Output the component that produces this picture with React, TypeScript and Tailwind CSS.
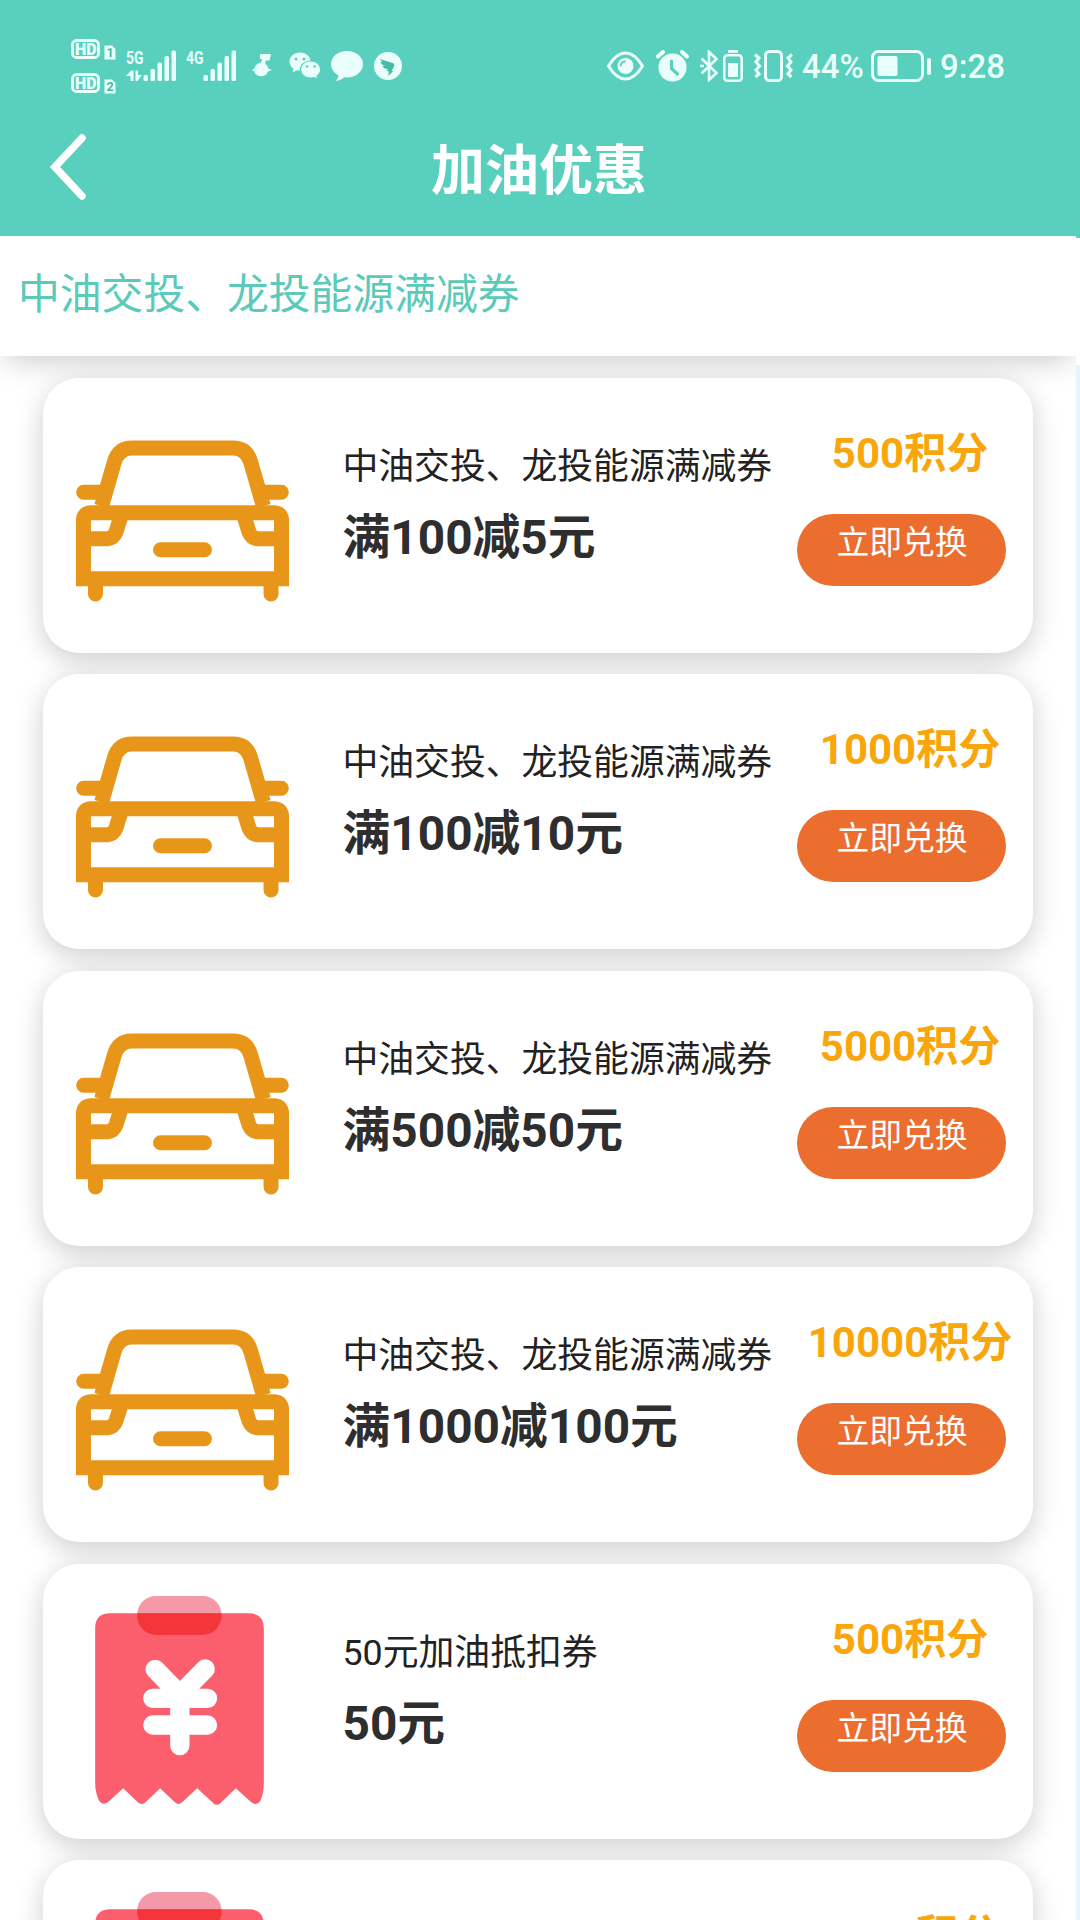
import type { ReactNode } from "react";

type Coupon = {
  id: number;
  icon: "car" | "ticket";
  name: string;
  value: string;
  points: number;
};

const coupons: Coupon[] = [
  { id: 1, icon: "car", name: "中油交投、龙投能源满减券", value: "满100减5元", points: 500 },
  { id: 2, icon: "car", name: "中油交投、龙投能源满减券", value: "满100减10元", points: 1000 },
  { id: 3, icon: "car", name: "中油交投、龙投能源满减券", value: "满500减50元", points: 5000 },
  { id: 4, icon: "car", name: "中油交投、龙投能源满减券", value: "满1000减100元", points: 10000 },
  { id: 5, icon: "ticket", name: "50元加油抵扣券", value: "50元", points: 500 },
  { id: 6, icon: "ticket", name: "50元加油抵扣券", value: "100元", points: 1000 },
];

function CarIcon() {
  return (
    <svg className="w-[213px] h-[162px]" viewBox="137 209 640 485" fill="none" stroke="#e8961a" strokeWidth={45}>
      <path d="M214 407 L252 275 Q264 232 305 232 H609 Q650 232 662 275 L700 407" />
      <path d="M160 365 H215 M699 365 H754" strokeLinecap="round" />
      <path d="M159.5 625 V447 Q162 426.5 182 426.5 H732 Q752 426.5 754.5 447 V625 Z" />
      <path d="M170 505 H232 Q250 503 257 485 L271 440 M744 505 H682 Q664 503 657 485 L643 440" />
      <path d="M391 538 H523 M195.500 640 V671 M723 640 V671" strokeLinecap="round" />
    </svg>
  );
}

function TicketIcon() {
  return (
    <svg className="w-[169px] h-[210px]" viewBox="197 138 506 630">
      <rect x="323" y="138" width="253" height="117" rx="56" fill="#f399a8" />
      <path
        d="M242 190 H658 Q703 190 703 235 V700 Q703 730 692 754 Q682 768 665 757 L619 715 L574 758 Q562 771 550 758 L503 715 L458 757 Q447 767 436 757 L392 715 L348 757 Q336 767 325 757 L281 715 L237 755 Q219 769 208 751 Q197 728 197 700 V235 Q197 190 242 190 Z"
        fill="#fb5f6d"
      />
      <path d="M323 190 H576 V199 Q576 220 560 238 Q542 255 520 255 H379 Q357 255 339 238 Q323 220 323 199 Z" fill="#f4363a" />
      <path
        d="M377 358 L451 434 L527 357 M370 445 H534 M370 525 H534 M451 434 V587"
        fill="none"
        stroke="#fff"
        strokeWidth={58}
        strokeLinecap="round"
      />
    </svg>
  );
}

function HdBadge({ sim }: { sim: string }) {
  return (
    <svg className="w-[44px] h-[20px] overflow-visible" viewBox="0 0 44 20">
      <rect x="1.500" y="1.500" width="26" height="17" rx="4" fill="none" stroke="#eafffb" strokeWidth={2.8} />
      <text x="4" y="16" textLength="21.500" lengthAdjust="spacingAndGlyphs" fontSize="17" fontWeight="900" fill="#eafffb">
        HD
      </text>
      <path d="M33.500 6.500 H41 L44.500 10 V20.500 H33.500 Z" fill="#eafffb" />
      <text x="39" y="18.300" textAnchor="middle" fontSize="12.500" fontWeight="700" fill="#3fb9a4">
        {sim}
      </text>
    </svg>
  );
}

function Signal({ label, arrows }: { label: string; arrows?: boolean }) {
  return (
    <svg className="w-[50px] h-[32px] overflow-visible" viewBox="0 0 50 32" fill="#eafffb">
      <text x="-1" y="14" fontSize="19" fontWeight="700" textLength="17.500" lengthAdjust="spacingAndGlyphs">
        {label}
      </text>
      {arrows && <path d="M-1 26 L4 20.500 H6.500 V31 H3.500 V26 Z M8.500 20.500 H11 V25 H15 L10.500 31 H8.500 Z" />}
      <rect x="16.500" y="25" width="4.500" height="6" rx="1.500" />
      <rect x="23.500" y="19" width="4.500" height="12" rx="1.500" />
      <rect x="30.500" y="12.500" width="4.500" height="18.500" rx="1.500" />
      <rect x="37.500" y="6" width="4.500" height="25" rx="1.500" />
      <rect x="44.500" y="0.500" width="4.500" height="30.500" rx="1.500" />
    </svg>
  );
}

function StatusBar() {
  return (
    <div className="h-[106px] pt-[26px] pl-[71px] pr-[71px] flex items-center justify-between text-[#eafffb]">
      <div className="flex items-center">
        <div className="flex flex-col gap-[14px]">
          <HdBadge sim="1" />
          <HdBadge sim="2" />
        </div>
        <div className="ml-[12px]">
          <Signal label="5G" arrows />
        </div>
        <div className="ml-[10px]">
          <Signal label="4G" />
        </div>
        {/* music note */}
        <svg className="ml-[15px] w-[20px] h-[24px]" viewBox="0 0 20 24" fill="#eafffb">
          <path d="M8 0 H19 L17.500 6.500 H13.500 V10 A7.300 7.300 0 0 1 16.300 14.500 L20 16 L16 17.500 A7.300 7.300 0 0 1 2.300 17.500 L0 15.800 L2.300 14.500 A7.500 7.500 0 0 1 8.500 9 L10.500 5 H8 Z" />
        </svg>
        {/* wechat */}
        <svg className="ml-[17px] w-[32px] h-[28px]" viewBox="0 0 32 28">
          <path d="M11 0.500 C5 0.500 0.500 4.500 0.500 9.500 C0.500 12.500 2 15 4.500 16.700 L3.500 20.500 L8 18.200 C17 20 21.500 15 21.500 9.500 C21.500 4.500 17 0.500 11 0.500 Z" fill="#eafffb" />
          <path
            d="M21.500 9 C15.700 9 11.500 12.500 11.500 17.500 C11.500 22.500 16 26 21.500 26 Q23.500 26 25 25.500 L28.800 27.500 L28 24 C30.500 22.300 31.700 20 31.700 17.500 C31.700 12.500 27.300 9 21.500 9 Z"
            fill="#eafffb"
            stroke="#58d0bd"
            strokeWidth={1.2}
          />
          <g fill="#58d0bd">
            <circle cx="7" cy="7" r="1.500" />
            <circle cx="15" cy="7" r="1.500" />
            <circle cx="18" cy="14.500" r="1.300" />
            <circle cx="25.500" cy="14.500" r="1.300" />
          </g>
        </svg>
        {/* chat bubble */}
        <svg className="ml-[10px] w-[32px] h-[30px]" viewBox="0 0 32 30" fill="#eafffb">
          <path d="M16 0 C7 0 0 5.800 0 13 C0 18 3 22 7.500 24.500 Q7 28 4.500 30 Q10 29.500 13 26.300 C24 27.500 32 21 32 13 C32 5.800 25 0 16 0 Z" />
        </svg>
        {/* dingtalk */}
        <svg className="ml-[11px] w-[28px] h-[28px]" viewBox="0 0 28 28">
          <circle cx="14" cy="14" r="14" fill="#eafffb" />
          <path d="M5.500 7 L18.500 11 Q21 12 20 14.500 L17.500 19 H19.500 L14 24 L15 19.500 L12.500 19 L14 17 Q10 17.500 8.500 14 L11 14 Q7 12.500 6.500 9.800 L8.500 10 Z" fill="#45bba8" />
        </svg>
      </div>

      <div className="flex items-center">
        {/* eye */}
        <svg className="w-[37px] h-[30px]" viewBox="0 0 37 30" fill="none" stroke="#eafffb" strokeWidth={3}>
          <path d="M1.500 15 C6 7.500 11 2 18.500 2 C26 2 31 7.500 35.500 15 C31 22.500 26 28 18.500 28 C11 28 6 22.500 1.500 15 Z" />
          <circle cx="18.500" cy="15" r="8" fill="#eafffb" stroke="none" />
          <path d="M13.500 15.500 Q14 10.500 18.500 10.500" stroke="#58d0bd" strokeWidth={1.8} />
        </svg>
        {/* alarm clock */}
        <svg className="ml-[12px] w-[33px] h-[32px]" viewBox="0 0 33 32" fill="none" strokeLinecap="round">
          <circle cx="16.500" cy="17.500" r="14" fill="#eafffb" />
          <path d="M2 6.500 L7 2 M31 6.500 L26 2" stroke="#eafffb" strokeWidth={4} />
          <path d="M15.500 11 V18.500 L21.500 24" stroke="#58d0bd" strokeWidth={3.2} />
        </svg>
        {/* bluetooth */}
        <svg className="ml-[11px] w-[19px] h-[32px]" viewBox="0 0 19 32" fill="none" stroke="#eafffb" strokeWidth={2.6}>
          <path d="M1.500 8.500 L16.500 23 L9 30 V2 L16.500 9 L1.500 23.500 M0 16 H4" />
        </svg>
        <svg className="ml-[4px] w-[20px] h-[32px]" viewBox="0 0 20 32">
          <rect x="5" y="0" width="10" height="2.800" fill="#eafffb" />
          <rect x="1.300" y="5.200" width="17.400" height="25.500" rx="3" fill="none" stroke="#eafffb" strokeWidth={2.6} />
          <rect x="5" y="13" width="10" height="14" fill="#eafffb" />
        </svg>
        {/* vibrate */}
        <svg className="ml-[11px] w-[39px] h-[32px]" viewBox="0 0 39 32" fill="none" stroke="#eafffb" strokeWidth={3}>
          <rect x="11.500" y="1.500" width="16" height="29" rx="4" />
          <path d="M1 4.500 L5 8 L2 12 L5.500 16 L2 20 L5 24 L1.500 27 M38 4.500 L34 8 L37 12 L33.500 16 L37 20 L34 24 L37.500 27" />
        </svg>
        <span className="ml-[9px] w-[62px] text-[33px] leading-none font-medium whitespace-nowrap">44%</span>
        <svg className="ml-[7px] w-[60px] h-[32px]" viewBox="0 0 60 32">
          <rect x="1.500" y="1.500" width="50" height="29" rx="6" fill="none" stroke="#eafffb" strokeWidth={3} />
          <rect x="6.500" y="6" width="20" height="20" rx="2" fill="#eafffb" />
          <rect x="56" y="8" width="4" height="17" rx="1.800" fill="#eafffb" />
        </svg>
        <span className="ml-[9px] w-[65px] text-[33px] leading-none font-medium whitespace-nowrap">9:28</span>
      </div>
    </div>
  );
}

function NavBar({ children }: { children: ReactNode }) {
  return (
    <div className="h-[130px] px-[50px] grid grid-cols-[40px_1fr_38px] items-center">
      <svg className="w-[38px] h-[68px] -mt-[8px]" viewBox="0 0 38 68" fill="none" stroke="#fff" strokeWidth={7.5} strokeLinecap="round">
        <path d="M32 5 L5 34 L32 63" />
      </svg>
      <h1 className="text-center text-[54px] leading-[64px] font-bold text-white mt-[2px]">{children}</h1>
    </div>
  );
}

function CouponCard({ coupon }: { coupon: Coupon }) {
  return (
    <div className="h-[275px] shrink-0 rounded-[36px] bg-white shadow-[0_7px_28px_rgba(0,0,0,0.2)] flex">
      <div className={`w-[277px] flex justify-center ${coupon.icon === "car" ? "pt-[62px] pl-[2px]" : "pt-[32px] pr-[4px]"}`}>
        {coupon.icon === "car" ? <CarIcon /> : <TicketIcon />}
      </div>
      <div className="w-[454px] ml-[22.5px] pt-[67px] whitespace-nowrap">
        <div className="text-[35.8px] leading-[44px] text-[#222]">{coupon.name}</div>
        <div className="mt-[21px] text-[47.8px] leading-[56px] font-bold text-[#2e2e2e]">{coupon.value}</div>
      </div>
      <div className="w-[209px] ml-[0.5px] pt-[51px] flex flex-col items-center">
        <div className="ml-[17px] text-[42px] leading-[50px] font-bold text-[#f9a60c] whitespace-nowrap">{coupon.points}积分</div>
        <button className="mt-[35px] w-[209px] h-[72px] shrink-0 rounded-full bg-[#eb6e2e] pb-[13px] pl-[1px] text-[32.8px] leading-none text-white">
          立即兑换
        </button>
      </div>
    </div>
  );
}

export default function App() {
  return (
    <div className="w-[1080px] h-[1920px] overflow-hidden bg-white flex font-[Roboto,'Noto_Sans_CJK_SC',sans-serif]">
      <div className="w-[1076px] flex flex-col">
        <header className="relative z-10 h-[236px] shrink-0 bg-[#58d0bd]">
          <StatusBar />
          <NavBar>加油优惠</NavBar>
        </header>
        <div className="h-[120px] shrink-0 bg-white pl-[18px] flex items-center shadow-[0_10px_28px_-6px_rgba(0,0,0,0.22)]">
          <span className="text-[41.8px] text-[#5bcab8] -mt-[1px]">中油交投、龙投能源满减券</span>
        </div>
        <main className="pt-[21.75px] pl-[43px] pr-[43px] flex flex-col gap-[21.5px]">
          {coupons.map((coupon) => (
            <CouponCard key={coupon.id} coupon={coupon} />
          ))}
        </main>
      </div>
      {/* page edge */}
      <div className="relative z-10 w-[4px] flex flex-col">
        <div className="h-[238px] bg-[#58d0bd]" />
        <div className="h-[127px] bg-white" />
        <div className="flex-1 bg-[#e8f4fb]" />
      </div>
    </div>
  );
}
